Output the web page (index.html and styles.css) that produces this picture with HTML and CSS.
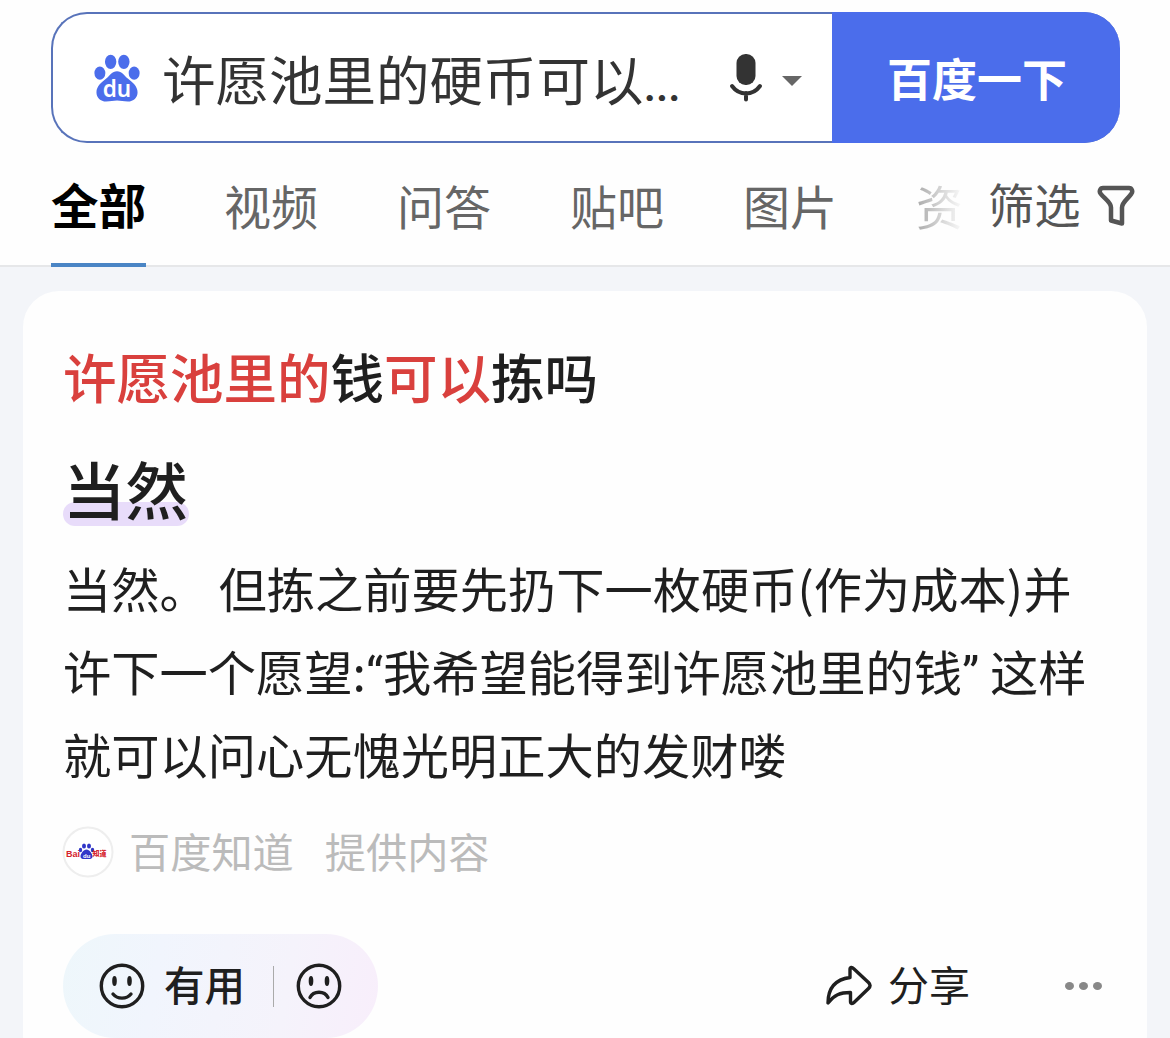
FILE: index.html
```html
<!doctype html>
<html lang="zh-CN">
<head>
  <meta charset="utf-8">
  <title>百度一下</title>
  <link rel="stylesheet" href="styles.css">
</head>
<body>

  <header class="header">
    <div class="search">
      <svg class="paw" viewBox="0 0 48 50">
        <ellipse cx="6" cy="20" rx="5.600" ry="6.800"/>
        <ellipse cx="17" cy="8.500" rx="5.800" ry="7.300"/>
        <ellipse cx="30.500" cy="8.500" rx="5.800" ry="7.300"/>
        <ellipse cx="41" cy="20" rx="5.600" ry="6.800"/>
        <path d="M23.500 18c5 0 7.500 4.500 11 7.500 5 4 10 8 10 14 0 5.500-4 9.500-10 9.500-4.500 0-7-1-11-1s-6.500 1-11 1c-6 0-10-4-10-9.500 0-6 5-10 10-14 3.500-3 6-7.500 11-7.500z"/>
        <text x="23.500" y="44.500" text-anchor="middle">du</text>
      </svg>
      <div class="query">许愿池里的硬币可以<span class="dots">...</span></div>
      <svg class="mic" viewBox="0 0 34 50">
        <rect x="7.500" y="1" width="19" height="31" rx="9"/>
        <path d="M3 33c4 5.500 8.500 7.500 14 7.500s10-2 14-7.500M17 40v6.500" fill="none" stroke="#333" stroke-width="4" stroke-linecap="round"/>
      </svg>
      <span class="caret"></span>
      <div class="submit">百度一下</div>
    </div>

    <nav class="tabs">
      <span class="tab active">全部</span>
      <span class="tab">视频</span>
      <span class="tab">问答</span>
      <span class="tab">贴吧</span>
      <span class="tab">图片</span>
      <span class="tab fade">资</span>
      <span class="filter">筛选
        <svg viewBox="0 0 38 42"><path d="M6 3h26c3 0 4 3.500 2.500 5.500-3 5-9.500 8.500-9.500 14v16l-11-3v-13c0-5.500-7-9-10.500-14C2 6.500 3 3 6 3z"/></svg>
      </span>
    </nav>
  </header>

  <main class="card">
    <h1 class="title"><em>许愿池里的</em>钱<em>可以</em>拣吗</h1>
    <h2 class="answer"><span>当然</span></h2>
    <p class="text">当然。 但拣之前要先扔下一枚硬币(作为成本)并<br>许下一个愿望:<span class="quote">“</span>我希望能得到许愿池里的钱<span class="quote">”</span> 这样<br>就可以问心无愧光明正大的发财喽</p>

    <div class="source">
      <svg class="avatar" viewBox="0 0 52 52">
        <circle cx="26" cy="26" r="24.500"/>
        <text x="4" y="30.500" fill="#d5222c">Bai</text>
        <g fill="#3036c8">
          <ellipse cx="18.500" cy="24" rx="1.700" ry="2.200"/>
          <ellipse cx="22" cy="20" rx="2" ry="2.600"/>
          <ellipse cx="27" cy="20" rx="2" ry="2.600"/>
          <ellipse cx="30.500" cy="24" rx="1.700" ry="2.200"/>
          <path d="M24.500 23.500c3 0 6 4.500 6 7 0 3-3 2.500-6 2.500s-6 .5-6-2.500c0-2.500 3-7 6-7z"/>
        </g>
        <text class="du" x="21" y="32">du</text>
        <text x="30.500" y="30" class="cn" fill="#d5222c">知道</text>
      </svg>
      <span class="site">百度知道</span>
      <span>提供内容</span>
    </div>

    <div class="actions">
      <div class="feedback">
        <svg class="face" viewBox="0 0 46 46">
          <circle cx="23" cy="23" r="20.700"/>
          <ellipse class="eye" cx="15.500" cy="18" rx="2.300" ry="5"/>
          <ellipse class="eye" cx="30.500" cy="18" rx="2.300" ry="5"/>
          <path d="M14 31c4.500 5.500 13.500 5.500 18 0"/>
        </svg>
        <span class="useful">有用</span>
        <i class="line"></i>
        <svg class="face" viewBox="0 0 46 46">
          <circle cx="23" cy="23" r="20.700"/>
          <ellipse class="eye" cx="15" cy="18" rx="2.300" ry="5"/>
          <ellipse class="eye" cx="31" cy="18" rx="2.300" ry="5"/>
          <path d="M14 34.500c3.500-7 14.500-7 18 0"/>
        </svg>
      </div>
      <div class="share">
        <svg viewBox="0 0 48 42"><path d="M25 4.500c0-2.500 2-2.500 3.500-1l15 14c2 2 2 4 0 6l-14 13.500c-2 2-4 2-4-.5v-9C15 27.500 9 30 3 38 3 23 10 14.500 25 12.500z"/></svg>
        <span>分享</span>
      </div>
      <div class="more"><i></i><i></i><i></i></div>
    </div>
  </main>

</body>
</html>
```

FILE: styles.css
```css
* {
  box-sizing: border-box;
}

body {
  margin: 0;
  height: 1038px;
  overflow: hidden;
  background: #f3f5f9;
  font-family: "Noto Sans CJK SC", sans-serif;
  color: #1f1f1f;
}

svg {
  display: block;
  flex: none;
}

/* search bar */

.header {
  height: 267px;
  padding: 12px 0 0 51px;
  background: #fefefe;
  border-bottom: 2px solid #e6e7e9;
}

.search {
  display: flex;
  align-items: center;
  width: 1069px;
  height: 131px;
  padding-left: 41px;
  border: 2px solid #5873ba;
  border-right: 0;
  border-radius: 36px;
  background: #fff;
}

.paw {
  width: 47px;
  height: 50px;
  fill: #4b6deb;
}

.paw text {
  fill: #fff;
  font: 600 23px "Noto Sans", sans-serif;
}

.query {
  width: 566px;
  padding-left: 21px;
  font-size: 53.5px;
  line-height: 122px;
  color: #333;
  white-space: nowrap;
}

.dots {
  font-family: Roboto, sans-serif;
  font-size: 46px;
  font-weight: 500;
  letter-spacing: -.5px;
  line-height: 1;
}

.mic {
  width: 34px;
  height: 50px;
  margin-left: 22px;
  fill: #333;
}

.caret {
  margin: 6px 30px 0 19px;
  border: 10px solid transparent;
  border-top-color: #666;
  border-bottom: 0;
}

.submit {
  flex: 1;
  align-self: stretch;
  margin: -2px 0;
  padding-left: 55px;
  border-radius: 0 36px 36px 0;
  background: #4b6deb;
  color: #fff;
  font-size: 45px;
  font-weight: 700;
  line-height: 132px;
}

/* tabs */

.tabs {
  display: flex;
  height: 124px;
}

.tab {
  flex: none;
  width: 95px;
  margin-right: 78px;
  font-size: 47px;
  line-height: 123px;
  color: #666;
}

.active {
  border-bottom: 4px solid #4a85c5;
  color: #000;
  font-size: 47.5px;
  font-weight: 700;
  line-height: 121px;
}

.fade {
  width: 45px;
  margin-right: 27px;
  background: linear-gradient(90deg, #aaa, #f8f8f8);
  -webkit-background-clip: text;
  background-clip: text;
  color: transparent;
}

.filter {
  display: flex;
  align-items: center;
  gap: 16px;
  height: 119px;
  font-size: 46.3px;
  color: #555;
}

.filter svg {
  width: 38px;
  height: 42px;
  margin-top: 7px;
  fill: none;
  stroke: #555;
  stroke-width: 4.5;
  stroke-linejoin: round;
}

/* result */

.card {
  width: 1124px;
  height: 780px;
  margin: 24px 0 0 23px;
  padding: 45px 40px 0;
  border-radius: 36px;
  background: #fefefe;
}

.title {
  margin: 0;
  font-size: 53.5px;
  font-weight: 500;
  line-height: 80px;
}

.title em {
  font-style: normal;
  color: #d9403d;
}

.answer {
  display: flex;
  margin: 22px 0 0;
  font-size: 62.5px;
  font-weight: 500;
  line-height: 100px;
}

.answer span {
  position: relative;
  z-index: 0;
  width: 126px;
}

.answer span::before {
  content: "";
  position: absolute;
  z-index: -1;
  left: 0;
  right: 0;
  top: 64px;
  height: 24px;
  border-radius: 12px;
  background: #e8dcfa;
}

.text {
  margin: 8px 0 0;
  font-size: 48.250px;
  line-height: 83px;
  white-space: nowrap;
}

.quote {
  font-family: Roboto, sans-serif;
  line-height: 1;
}

.source {
  display: flex;
  align-items: center;
  height: 52px;
  margin-top: 31px;
  font-size: 41.2px;
  line-height: 52px;
  color: #bbb;
}

.source span {
  margin-top: -5px;
}

.source .avatar {
  width: 52px;
  height: 52px;
  margin: 0 15px 0 -1px;
}

.avatar circle {
  fill: #fff;
  stroke: #eee;
  stroke-width: 2;
}

.avatar text {
  font: 700 9px "Liberation Sans", sans-serif;
}

.avatar .du {
  fill: #fff;
  font-size: 6px;
}

.avatar .cn {
  font: 900 7px "Noto Sans CJK SC", sans-serif;
}

.site {
  margin-right: 31px;
}

.actions {
  display: flex;
  align-items: center;
  height: 104px;
  margin-top: 56px;
}

.feedback {
  display: flex;
  align-items: center;
  width: 315px;
  height: 104px;
  padding-left: 36px;
  border-radius: 52px;
  background: linear-gradient(100deg, #eef7fb, #f1f5fd 30%, #f5f3fb 70%, #f8eefb);
}

.face {
  width: 46px;
  height: 46px;
  fill: none;
  stroke: #1f1f1f;
  stroke-width: 3.4;
  stroke-linecap: round;
}

.eye {
  fill: #1f1f1f;
  stroke: none;
}

.useful {
  margin: -5px 28px 0 19px;
  font-size: 40.5px;
  font-weight: 500;
}

.line {
  width: 1px;
  height: 41px;
  margin-right: 22px;
  background: #aaa;
}

.share {
  display: flex;
  align-items: center;
  gap: 15px;
  margin-left: 447px;
  font-size: 41px;
}

.share span {
  margin-top: -6px;
}

.share svg {
  width: 48px;
  height: 42px;
  fill: none;
  stroke: #1f1f1f;
  stroke-width: 3.4;
  stroke-linejoin: round;
}

.more {
  display: flex;
  gap: 5px;
  margin-left: 95px;
}

.more i {
  width: 9px;
  height: 8px;
  border-radius: 50%;
  background: #888;
}
```
